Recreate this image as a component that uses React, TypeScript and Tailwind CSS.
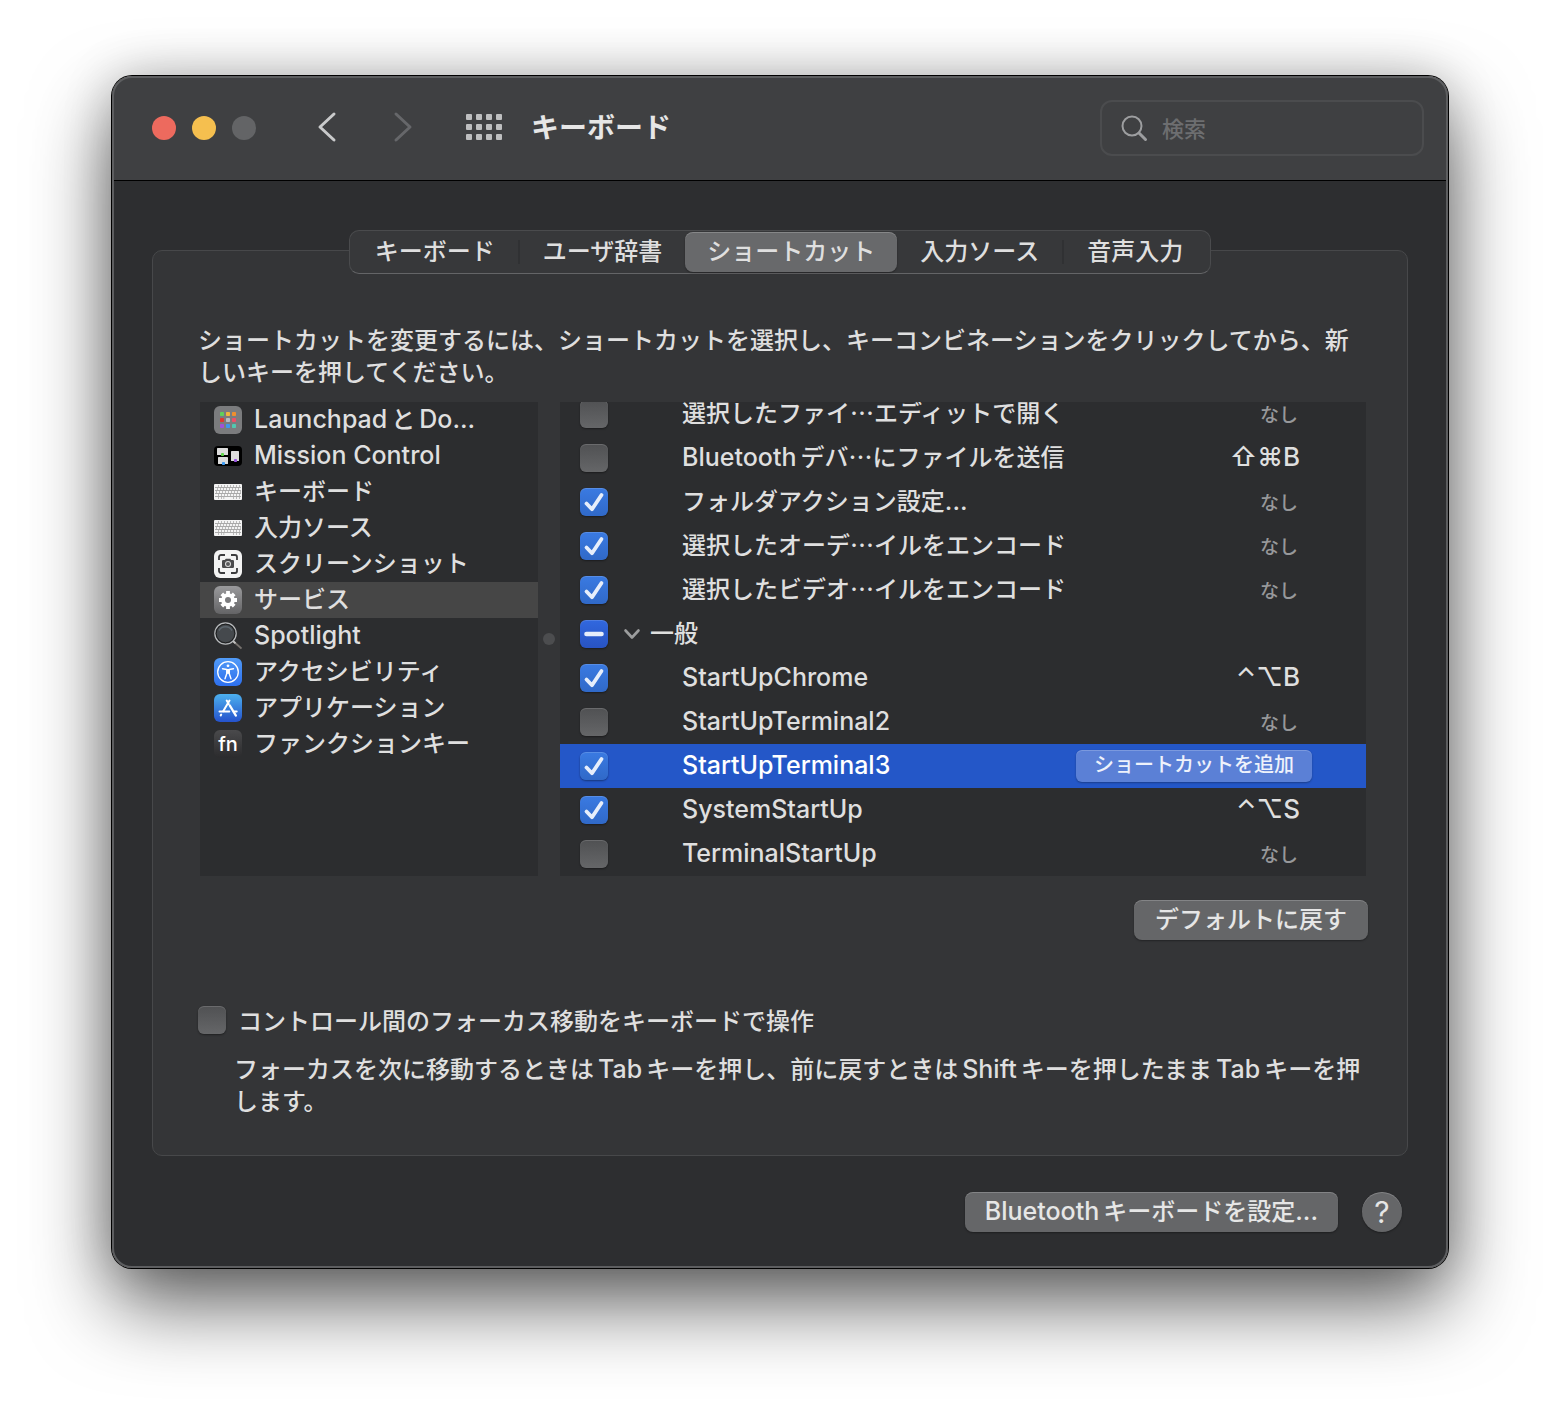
import { ReactNode, useState } from "react";
import clsx from "clsx";

const jpFont = "font-['Noto_Sans_CJK_JP',sans-serif]";
const latinFont = "font-[Inter,'DejaVu_Sans','Noto_Sans_CJK_JP',sans-serif]";

// Latin runs are set in Inter with a little air between them and the kana
function MixedText({ children }: { children: string }) {
  const parts = children.split(/([\x20-\x7e]+)/).filter(Boolean);

  return (
    <>
      {parts.map((part, index) => {
        if (!/[\x20-\x7e]/.test(part)) return part;
        const isWord = /[A-Za-z]/.test(part);
        return (
          <span
            key={index}
            className={clsx(
              latinFont,
              "text-[25px] leading-none font-medium",
              isWord && index > 0 && "ml-1",
              isWord && index < parts.length - 1 && "mr-1"
            )}
          >
            {part}
          </span>
        );
      })}
    </>
  );
}

function LaunchpadIcon() {
  const colors = [
    "#5fd05a", "#f0b53c", "#ef8f2e",
    "#e0382f", "#b9bcc2", "#ee4f68",
    "#a052d8", "#3f97ee", "#52c8b0",
  ];
  return (
    <svg viewBox="0 0 28 28" className="size-7">
      <rect width="28" height="28" rx="6" fill="#7b7c7e" />
      {colors.map((color, i) => (
        <rect
          key={color}
          x={6 + (i % 3) * 6}
          y={6 + Math.floor(i / 3) * 6}
          width="4"
          height="4"
          rx="0.8"
          fill={color}
        />
      ))}
    </svg>
  );
}

function MissionControlIcon() {
  return (
    <svg viewBox="0 0 28 28" className="size-7">
      <rect y="4" width="28" height="20" rx="4" fill="#000" />
      <rect x="3" y="6" width="11" height="7" rx="0.6" fill="#dcdcdc" />
      <rect x="4" y="15" width="10" height="7" rx="0.6" fill="#dcdcdc" />
      <rect x="17" y="9" width="8" height="10" rx="0.6" fill="#dcdcdc" />
      <rect x="7" y="11" width="3" height="3" rx="0.8" fill="#62d84e" />
      <rect x="8" y="20" width="3" height="3" rx="0.8" fill="#3e9df5" />
      <rect x="20" y="17" width="3" height="3" rx="0.8" fill="#9a55e0" />
    </svg>
  );
}

function KeyboardIcon() {
  return (
    <svg viewBox="0 0 28 28" className="size-7">
      <rect y="6" width="28" height="16" rx="1" fill="#f4f4f4" />
      <g stroke="#a2a2a2" fill="none">
        <path d="M1 9.500H27M1 12.500H27M1 15.500H27M1 18.500H27" strokeWidth="0.900" />
        <path d="M2 8H27" strokeWidth="2" strokeDasharray="0.700 2.300" strokeDashoffset="-2" />
        <path d="M2 11H27" strokeWidth="2" strokeDasharray="0.700 2.300" strokeDashoffset="-1" />
        <path d="M2 14H27" strokeWidth="2" strokeDasharray="0.700 2.300" />
        <path d="M2 17H27" strokeWidth="2" strokeDasharray="0.700 2.300" strokeDashoffset="-2" />
        <path d="M4 20h.7M7 20h.7M9.500 20h.7M19 20h.7M22 20h.7M25 20h.7" strokeWidth="2" />
      </g>
    </svg>
  );
}

function ScreenshotIcon() {
  return (
    <svg viewBox="0 0 28 28" className="size-7" fill="none">
      <rect width="28" height="28" rx="6" fill="#f3f3f3" />
      <path
        d="M5 10V7a2 2 0 0 1 2-2h4M17 5h4a2 2 0 0 1 2 2v3M23 18v3a2 2 0 0 1-2 2h-4M11 23H7a2 2 0 0 1-2-2v-3"
        stroke="#3b3b3d"
        strokeWidth="1.800"
      />
      <path
        d="M9.200 10h1.600l1-1.300h4.400l1 1.300h1.600a1.200 1.200 0 0 1 1.200 1.200v5.600a1.200 1.200 0 0 1-1.200 1.200H9.200A1.200 1.200 0 0 1 8 16.800v-5.600A1.200 1.200 0 0 1 9.200 10z"
        fill="#4a4a4c"
      />
      <circle cx="14" cy="14" r="3" fill="#dcdcdc" />
      <circle cx="14" cy="14" r="2" fill="#5a5a5c" />
    </svg>
  );
}

function ServicesIcon() {
  return (
    <svg viewBox="0 0 28 28" className="size-7">
      <defs>
        <linearGradient id="services" x2="0" y2="1">
          <stop stopColor="#9a9a9c" />
          <stop offset="1" stopColor="#646466" />
        </linearGradient>
      </defs>
      <rect width="28" height="28" rx="6" fill="url(#services)" />
      <g stroke="#fff" strokeWidth="3.800">
        <path d="M14 5v18M5 14h18M7.800 7.800l12.400 12.400M20.200 7.800L7.800 20.200" />
      </g>
      <circle cx="14" cy="14" r="6.800" fill="#fff" />
      <circle cx="14" cy="14" r="3" fill="#7c7c7e" />
    </svg>
  );
}

function SpotlightIcon() {
  return (
    <svg viewBox="0 0 28 28" className="size-7" fill="none">
      <path d="M19 19l8.500 7.500" stroke="#77736f" strokeWidth="1.800" />
      <path d="M19 19l2.500 2.300" stroke="#c2c2c2" strokeWidth="1.800" />
      <circle cx="11.500" cy="11.500" r="10.700" fill="#45494d" stroke="#b9bbbd" strokeWidth="1.200" />
      <circle cx="11.500" cy="11.500" r="9.300" stroke="#1c1d1e" strokeWidth="1" />
      <path d="M5 8.500a7.600 7.600 0 0 1 13 0" stroke="#5d666d" strokeWidth="1.500" />
    </svg>
  );
}

function AccessibilityIcon() {
  return (
    <svg viewBox="0 0 28 28" className="size-7" fill="none">
      <defs>
        <linearGradient id="accessibility" x2="0" y2="1">
          <stop stopColor="#519bf7" />
          <stop offset="1" stopColor="#2d6fee" />
        </linearGradient>
      </defs>
      <rect width="28" height="28" rx="6" fill="url(#accessibility)" />
      <circle cx="14" cy="14" r="10.300" stroke="#fff" strokeWidth="1.300" />
      <circle cx="14" cy="7.800" r="1.400" fill="#fff" />
      <path
        d="M8.500 10.700l4.300.8v4L11 20.800M19.500 10.700l-4.300.8v4l1.800 5.300"
        stroke="#fff"
        strokeWidth="1.400"
        strokeLinecap="round"
        strokeLinejoin="round"
      />
      <path d="M12.300 11h3.400v4.800h-3.400z" fill="#fff" />
    </svg>
  );
}

function AppStoreIcon() {
  return (
    <svg viewBox="0 0 28 28" className="size-7" fill="none">
      <defs>
        <linearGradient id="appstore" x2="0" y2="1">
          <stop stopColor="#4cb0ee" />
          <stop offset="1" stopColor="#2552cc" />
        </linearGradient>
      </defs>
      <rect width="28" height="28" rx="6" fill="url(#appstore)" />
      <g stroke="#fff" strokeWidth="2" strokeLinecap="round">
        <path d="M15.500 6.500L9.200 17.200" />
        <path d="M12.700 6.500l2 3.400" />
        <path d="M15.800 11.500l6 10" strokeWidth="2.400" />
        <path d="M5.500 17.400h9.800M19.500 17.400h3.200" />
        <path d="M7.200 20.500l-.5.900" />
      </g>
    </svg>
  );
}

function FnIcon() {
  return (
    <span
      className={clsx(
        latinFont,
        "flex size-7 items-center justify-center rounded-md bg-linear-to-b from-[#4a4a4c] to-[#2b2b2d] text-xl leading-none font-medium text-white"
      )}
    >
      fn
    </span>
  );
}

const categories: { label: string; icon: ReactNode }[] = [
  { label: "LaunchpadとDo...", icon: <LaunchpadIcon /> },
  { label: "Mission Control", icon: <MissionControlIcon /> },
  { label: "キーボード", icon: <KeyboardIcon /> },
  { label: "入力ソース", icon: <KeyboardIcon /> },
  { label: "スクリーンショット", icon: <ScreenshotIcon /> },
  { label: "サービス", icon: <ServicesIcon /> },
  { label: "Spotlight", icon: <SpotlightIcon /> },
  { label: "アクセシビリティ", icon: <AccessibilityIcon /> },
  { label: "アプリケーション", icon: <AppStoreIcon /> },
  { label: "ファンクションキー", icon: <FnIcon /> },
];

type CheckState = "on" | "off" | "mixed";

interface Shortcut {
  name: string;
  state: CheckState;
  keys?: string;
  group?: boolean;
}

const initialShortcuts: Shortcut[] = [
  { name: "選択したファイ…エディットで開く", state: "off" },
  { name: "Bluetoothデバ…にファイルを送信", state: "off", keys: "⇧⌘B" },
  { name: "フォルダアクション設定...", state: "on" },
  { name: "選択したオーデ…イルをエンコード", state: "on" },
  { name: "選択したビデオ…イルをエンコード", state: "on" },
  { name: "一般", state: "mixed", group: true },
  { name: "StartUpChrome", state: "on", keys: "⌃⌥B" },
  { name: "StartUpTerminal2", state: "off" },
  { name: "StartUpTerminal3", state: "on" },
  { name: "SystemStartUp", state: "on", keys: "⌃⌥S" },
  { name: "TerminalStartUp", state: "off" },
];

const tabs = ["キーボード", "ユーザ辞書", "ショートカット", "入力ソース", "音声入力"];

interface CheckboxProps {
  id: string;
  state: CheckState;
  onToggle: () => void;
}

function Checkbox({ id, state, onToggle }: CheckboxProps) {
  return (
    <span className="relative block size-7 shrink-0">
      <input
        id={id}
        type="checkbox"
        checked={state === "on"}
        ref={(node) => {
          if (node) node.indeterminate = state === "mixed";
        }}
        onChange={onToggle}
        className={clsx(
          "block size-7 appearance-none rounded-md bg-linear-to-b shadow-[0_1px_2px_rgba(0,0,0,0.4),inset_0_1px_0_rgba(255,255,255,0.15)]",
          state === "off" && "from-[#505153] to-[#656668]",
          state === "on" && "from-[#3a7ae2] to-[#3069c8]",
          state === "mixed" && "from-[#3168df] to-[#2853c2]"
        )}
      />
      {state !== "off" && (
        <svg
          viewBox="0 0 28 28"
          className="pointer-events-none absolute inset-0 size-7"
          fill="none"
          stroke="#e6eefb"
          strokeLinecap="round"
          strokeLinejoin="round"
        >
          {state === "on" ? (
            <path d="M6.500 15.500L12 21.200L21.500 7" strokeWidth="3.800" />
          ) : (
            <path d="M6.500 14H21.500" strokeWidth="4.600" />
          )}
        </svg>
      )}
    </span>
  );
}

const buttonClass =
  "rounded-lg bg-[#656668] text-[#e6e6e6] shadow-[0_1px_2px_rgba(0,0,0,0.35),inset_0_1px_0_rgba(255,255,255,0.2)]";

function TitleBar() {
  return (
    <header className="flex h-[105px] items-center border-b border-black bg-[#3f4042] pr-6 pl-10 shadow-[inset_0_2px_0_#6d6e6f]">
      <div className="flex gap-4">
        <button aria-label="閉じる" className="size-6 rounded-full bg-[#ed6a5e]" />
        <button aria-label="しまう" className="size-6 rounded-full bg-[#f5bf4f]" />
        <button aria-label="拡大" disabled className="size-6 rounded-full bg-[#636466]" />
      </div>

      <nav className="ml-[60px] flex items-center pb-0.5">
        <button aria-label="戻る" className="text-[#c9cacb]">
          <svg viewBox="0 0 24 32" className="h-8 w-6" fill="none" stroke="currentColor" strokeWidth="3" strokeLinecap="round" strokeLinejoin="round">
            <path d="M18 3L4 16L18 29" />
          </svg>
        </button>
        <button aria-label="進む" disabled className="ml-[50px] text-[#66676a]">
          <svg viewBox="0 0 24 32" className="h-8 w-6" fill="none" stroke="currentColor" strokeWidth="3" strokeLinecap="round" strokeLinejoin="round">
            <path d="M6 3L20 16L6 29" />
          </svg>
        </button>
        <button aria-label="すべてを表示" className="ml-[52px] text-[#bebfc0]">
          <svg viewBox="0 0 36 28" className="h-7 w-9" fill="currentColor">
            {[0, 1, 2].map((row) =>
              [0, 1, 2, 3].map((col) => (
                <rect key={`${row}-${col}`} x={col * 10} y={1 + row * 10} width="6" height="6" rx="1" />
              ))
            )}
          </svg>
        </button>
      </nav>

      <h1 className="ml-[29px] pb-1 text-[28px] leading-10 font-bold text-[#e6e6e6]">キーボード</h1>

      <label className="ml-auto flex h-14 w-[324px] items-center gap-3.5 rounded-xl border-2 border-[#4b4c4e] pl-[18px]">
        <svg viewBox="0 0 28 28" className="size-7 shrink-0" fill="none" stroke="#9d9ea0" strokeLinecap="round">
          <circle cx="12" cy="12" r="9.500" strokeWidth="2" />
          <path d="M19 19L25.500 25.500" strokeWidth="3" />
        </svg>
        <input
          type="search"
          aria-label="検索"
          placeholder="検索"
          className="w-full min-w-0 bg-transparent pb-0.5 text-[22px] leading-8 font-medium text-[#e0e0e0] outline-none placeholder:text-[#6d6e70]"
        />
      </label>
    </header>
  );
}

export default function App() {
  const [shortcuts, setShortcuts] = useState(initialShortcuts);
  const [activeTab, setActiveTab] = useState(2);
  const [activeCategory, setActiveCategory] = useState(5);
  const [selectedRow, setSelectedRow] = useState(8);
  const [focusMove, setFocusMove] = useState(false);

  const toggleShortcut = (index: number) => {
    setShortcuts((current) =>
      current.map((item, i) =>
        i === index ? { ...item, state: item.state === "on" ? "off" : "on" } : item
      )
    );
  };

  return (
    <main
      lang="ja"
      className={clsx(
        jpFont,
        "min-h-screen bg-white px-28 pt-[76px] pb-[148px] text-2xl leading-8 font-medium text-[#dfdfdf]"
      )}
    >
      <div className="rounded-[20px] shadow-[0_0_0_1px_#000,0_36px_80px_rgba(0,0,0,0.62),0_0_50px_rgba(0,0,0,0.2)]">
        <div className="relative overflow-hidden rounded-[20px] bg-[#2d2e30] after:pointer-events-none after:absolute after:inset-0 after:rounded-[20px] after:border-2 after:border-[#5d5e60]">
          <TitleBar />

          <div className="px-10 pt-[49px] pb-9">
            <div
              role="tablist"
              className="relative z-10 mx-auto -mb-6 flex h-11 w-fit items-center rounded-[10px] border border-[#4a4b4d] border-b-[#646567] bg-[#37383a] pr-1 pl-0.5"
            >
              {tabs.map((tab, index) => (
                <div key={tab} className="flex items-center">
                  <button
                    role="tab"
                    aria-selected={index === activeTab}
                    onClick={() => setActiveTab(index)}
                    className={clsx(
                      "h-10 rounded-lg pb-1 leading-9",
                      index === activeTab
                        ? "bg-[#68696b] px-[22px] shadow-[0_1px_2px_rgba(0,0,0,0.35),inset_0_1px_0_rgba(255,255,255,0.2)]"
                        : "px-[23px]"
                    )}
                  >
                    {tab}
                  </button>
                  {(index === 0 || index === 3) && <span className="h-6 w-0.5 bg-[#303133]" />}
                </div>
              ))}
            </div>

            <section className="rounded-[10px] border border-[#47484a] bg-[#343537] pt-[72px] pr-[39px] pb-[39px] pl-[45px]">
              <p>
                ショートカットを変更するには、ショートカットを選択し、キーコンビネーションをクリックしてから、新しいキーを押してください。
              </p>

              <div className="mt-[15px] flex h-[474px] px-0.5">
                <ul className="w-[338px] shrink-0 bg-[#2c2d2f]">
                  {categories.map((category, index) => (
                    <li key={category.label}>
                      <button
                        onClick={() => setActiveCategory(index)}
                        className={clsx(
                          "flex h-9 w-full items-center gap-3 pl-3.5 text-left whitespace-nowrap",
                          index === activeCategory && "bg-[#464646]"
                        )}
                      >
                        {category.icon}
                        <span className="pb-1">
                          <MixedText>{category.label}</MixedText>
                        </span>
                      </button>
                    </li>
                  ))}
                </ul>

                <div className="flex w-[22px] shrink-0 items-center justify-center">
                  <span className="size-3 rounded-full bg-[#4c4d4f]" />
                </div>

                <div className="min-w-0 flex-1 overflow-hidden bg-[#2c2d2f]">
                  <table className="-mt-2.5 w-full table-fixed">
                    <colgroup>
                      <col className="w-[62px]" />
                      <col />
                      <col className="w-[300px]" />
                    </colgroup>
                    <tbody>
                      {shortcuts.map((item, index) => {
                        const isSelected = index === selectedRow;
                        return (
                          <tr
                            key={item.name}
                            onClick={() => setSelectedRow(index)}
                            className={clsx("h-11", isSelected && "bg-[#2457c8] text-white")}
                          >
                            <td className="p-0 pl-5">
                              <Checkbox
                                id={`shortcut-${index}`}
                                state={item.state}
                                onToggle={() => toggleShortcut(index)}
                              />
                            </td>
                            <td className={clsx("p-0 pb-1 whitespace-nowrap", !item.group && "pl-[60px]")}>
                              <label htmlFor={`shortcut-${index}`} className="flex items-center">
                                {item.group && (
                                  <svg viewBox="0 0 20 20" className="mr-2 size-5" fill="none" stroke="#9c9d9e" strokeWidth="2.600" strokeLinecap="round" strokeLinejoin="round">
                                    <path d="M3.500 8.500L10 15.500L16.500 8.500" />
                                  </svg>
                                )}
                                <span>
                                  <MixedText>{item.name}</MixedText>
                                </span>
                              </label>
                            </td>
                            <td
                              className={clsx(
                                "p-0 text-right whitespace-nowrap",
                                isSelected && "pr-[54px]",
                                !isSelected && (item.keys ? "pr-[66px] pb-1" : "pr-[68px] pb-0.5")
                              )}
                            >
                              {isSelected ? (
                                <button className="block h-8 justify-self-end rounded-md bg-[#5b80d6] px-[18px] pb-1 text-xl leading-7 text-[#eef2fb] shadow-[0_1px_2px_rgba(0,0,0,0.3),inset_0_1px_0_rgba(255,255,255,0.2)]">
                                  ショートカットを追加
                                </button>
                              ) : item.keys ? (
                                <span className={clsx(latinFont, "text-[26px] leading-none")}>{item.keys}</span>
                              ) : (
                                !item.group && <span className="text-[19px] text-[#97989a]">なし</span>
                              )}
                            </td>
                          </tr>
                        );
                      })}
                    </tbody>
                  </table>
                </div>
              </div>

              <div className="mt-6 flex justify-end">
                <button className={clsx(buttonClass, "h-10 px-[21px] pb-1 leading-9")}>デフォルトに戻す</button>
              </div>

              <div className="mt-16 flex items-center gap-3">
                <Checkbox
                  id="focus-move"
                  state={focusMove ? "on" : "off"}
                  onToggle={() => setFocusMove(!focusMove)}
                />
                <label htmlFor="focus-move">コントロール間のフォーカス移動をキーボードで操作</label>
              </div>
              <p className="mt-4 pl-9">
                <MixedText>
                  フォーカスを次に移動するときはTabキーを押し、前に戻すときはShiftキーを押したままTabキーを押します。
                </MixedText>
              </p>
            </section>

            <footer className="mt-9 flex justify-end gap-6 pr-1.5">
              <button className={clsx(buttonClass, "h-10 px-5 pb-1 leading-9")}>
                <MixedText>Bluetoothキーボードを設定...</MixedText>
              </button>
              <button
                aria-label="ヘルプ"
                className="size-10 rounded-full bg-[#656668] font-[Inter,sans-serif] text-[30px] leading-10 font-normal text-[#e6e6e6] shadow-[0_1px_2px_rgba(0,0,0,0.35),inset_0_1px_0_rgba(255,255,255,0.2)]"
              >
                ?
              </button>
            </footer>
          </div>
        </div>
      </div>
    </main>
  );
}
